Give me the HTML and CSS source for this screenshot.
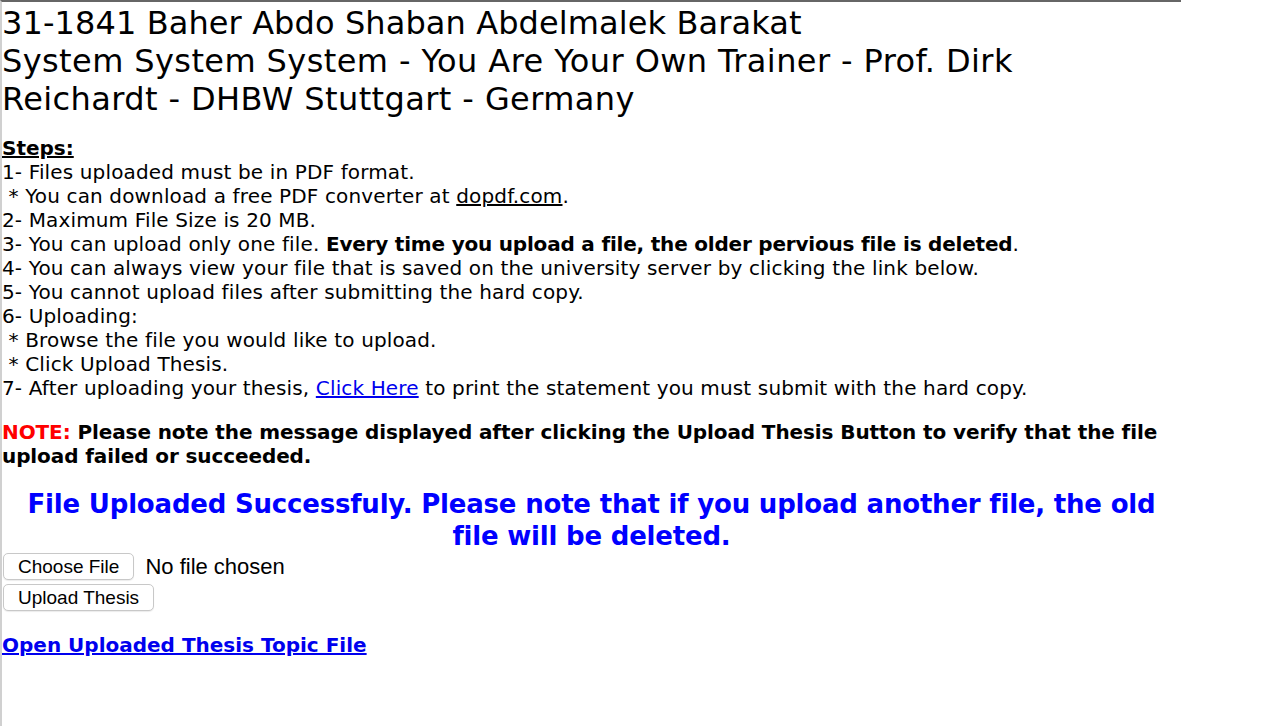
FILE: index.html
```html
<!DOCTYPE html>
<html>
<head>
<meta charset="utf-8">
<link rel="stylesheet" href="styles.css">
</head>
<body>
<div class="frame">
  <h1 class="title"><span class="title-first">31-1841 Baher Abdo Shaban Abdelmalek Barakat</span><br>System System System - You Are Your Own Trainer - Prof. Dirk Reichardt - DHBW Stuttgart - Germany</h1>
  <div class="steps">
    <div class="steps-head">Steps:</div>
    <div>1- Files uploaded must be in PDF format.</div>
    <div>&nbsp;* You can download a free PDF converter at <a class="plain-link" href="#">dopdf.com</a>.</div>
    <div>2- Maximum File Size is 20 MB.</div>
    <div>3- You can upload only one file. <b class="strong">Every time you upload a file, the older pervious file is deleted</b>.</div>
    <div>4- You can always view your file that is saved on the university server by clicking the link below.</div>
    <div>5- You cannot upload files after submitting the hard copy.</div>
    <div>6- Uploading:</div>
    <div>&nbsp;* Browse the file you would like to upload.</div>
    <div>&nbsp;* Click Upload Thesis.</div>
    <div>7- After uploading your thesis, <a class="blue-link" href="#">Click Here</a> to print the statement you must submit with the hard copy.</div>
  </div>
  <p class="note"><span class="note-label">NOTE:</span> Please note the message displayed after clicking the Upload Thesis Button to verify that the file upload failed or succeeded.</p>
  <p class="success">File Uploaded Successfuly. Please note that if you upload another file, the old file will be deleted.</p>
  <div class="file-row"><button class="btn">Choose File</button><span class="no-file">No file chosen</span></div>
  <div class="upload-row"><button class="btn">Upload Thesis</button></div>
  <a class="open-link" href="#">Open Uploaded Thesis Topic File</a>
</div>
</body>
</html>
```
FILE: styles.css
```css
html, body {
  margin: 0;
  padding: 0;
  background: #fff;
}
.frame {
  width: 1179px;
  height: 724px;
  border-top: 2px solid #666;
  border-left: 2px solid #d0d0d0;
  font-family: "DejaVu Sans", Verdana, sans-serif;
  color: #000;
  overflow: hidden;
}
.title {
  margin: 0;
  font-weight: normal;
  font-size: 32px;
  line-height: 38px;
  letter-spacing: 0.4px;
  padding-top: 2px;
  width: 1080px;
}
.title-first {
  letter-spacing: 0.1px;
}
.steps {
  margin-top: 18px;
  font-size: 20px;
  line-height: 24px;
  letter-spacing: 0.14px;
}
.steps-head {
  font-weight: bold;
  text-decoration: underline;
  letter-spacing: 0;
}
.strong {
  letter-spacing: -0.2px;
}
.plain-link {
  color: #000;
  text-decoration: underline;
}
.blue-link {
  color: #0000ee;
  text-decoration: underline;
}
.note {
  margin: 20px 0 0 0;
  font-size: 20px;
  line-height: 24px;
  font-weight: bold;
  letter-spacing: -0.1px;
  padding-right: 4px;
}
.note-label {
  color: #ff0000;
}
.success {
  margin: 20px 0 0 0;
  text-align: center;
  color: #0000ff;
  font-weight: bold;
  font-size: 26px;
  line-height: 32px;
  letter-spacing: -0.2px;
  padding: 0 12px;
}
.file-row {
  display: flex;
  align-items: center;
  height: 27px;
  padding-left: 1px;
  margin-top: 1px;
}
.upload-row {
  display: flex;
  margin-top: 4px;
  padding-left: 1px;
}
.btn {
  font-family: "Liberation Sans", Arial, sans-serif;
  font-size: 19px;
  color: #000;
  background: #fff;
  border: 1px solid #c8c8c8;
  border-radius: 5px;
  padding: 0 14px;
  height: 27px;
  line-height: 25px;
  box-shadow: 0 1px 1px rgba(0,0,0,0.08);
}
.no-file {
  font-family: "Liberation Sans", Arial, sans-serif;
  font-size: 22px;
  margin-left: 11px;
}
.open-link {
  display: inline-block;
  margin-top: 22px;
  color: #0000ee;
  font-weight: bold;
  font-size: 20px;
  text-decoration: underline;
}
```
